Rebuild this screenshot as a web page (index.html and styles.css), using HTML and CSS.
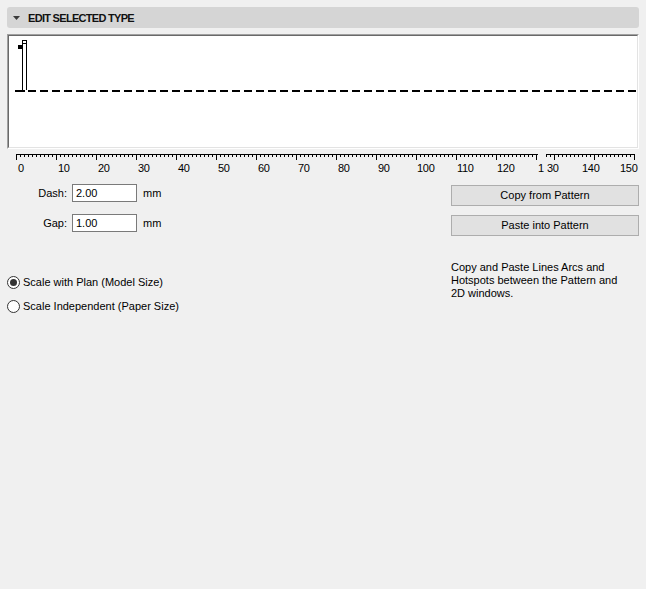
FILE: index.html
```html
<!DOCTYPE html>
<html>
<head>
<meta charset="utf-8">
<link rel="stylesheet" href="styles.css">
</head>
<body>
<div class="panel">
  <div class="header">
    <svg class="tri" width="7" height="4" viewBox="0 0 7 4"><path d="M0 0H7L3.5 4Z" fill="#3a3a3a"/></svg>
    <span class="title">EDIT SELECTED TYPE</span>
  </div>

  <div class="canvas">
    <div class="canvas-inner">
      <svg class="preview" width="628" height="111" viewBox="0 0 628 111">
        <rect x="6" y="54" width="10" height="2" fill="#000"/>
        <line x1="19" y1="55" x2="628" y2="55" stroke="#000" stroke-width="2" stroke-dasharray="8 4"/>
        <rect x="13" y="7" width="1" height="47" fill="#000"/>
        <rect x="17" y="7" width="1" height="47" fill="#000"/>
        <rect x="13.5" y="4.5" width="4" height="3" fill="#fff" stroke="#000"/>
        <rect x="9" y="9" width="5" height="4" fill="#000"/>
      </svg>
    </div>
  </div>

  <svg class="ruler" width="632" height="28" viewBox="7 149 632 28">
    <defs>
      <pattern id="minor" x="16" y="0" width="4" height="200" patternUnits="userSpaceOnUse">
        <rect x="0" y="0" width="1" height="200" fill="#000"/>
      </pattern>
      <pattern id="major" x="16" y="0" width="40" height="200" patternUnits="userSpaceOnUse">
        <rect x="0" y="0" width="1" height="200" fill="#000"/>
      </pattern>
      <pattern id="minor2" x="546" y="0" width="4" height="200" patternUnits="userSpaceOnUse">
        <rect x="0" y="0" width="1" height="200" fill="#000"/>
      </pattern>
      <pattern id="major2" x="554" y="0" width="40" height="200" patternUnits="userSpaceOnUse">
        <rect x="0" y="0" width="1" height="200" fill="#000"/>
      </pattern>
    </defs>
    <rect x="16" y="154" width="522" height="1" fill="#000"/>
    <rect x="16" y="155" width="522" height="2" fill="url(#minor)"/>
    <rect x="16" y="155" width="522" height="5" fill="url(#major)"/>
    <rect x="546" y="154" width="89" height="1" fill="#000"/>
    <rect x="546" y="155" width="89" height="2" fill="url(#minor2)"/>
    <rect x="554" y="155" width="81" height="5" fill="url(#major2)"/>
    <rect x="634" y="155" width="1" height="5" fill="#000"/>
    <g class="labels">
      <text x="18" y="172">0</text>
      <text x="58" y="172">10</text>
      <text x="98" y="172">20</text>
      <text x="138" y="172">30</text>
      <text x="178" y="172">40</text>
      <text x="218" y="172">50</text>
      <text x="258" y="172">60</text>
      <text x="298" y="172">70</text>
      <text x="338" y="172">80</text>
      <text x="378" y="172">90</text>
      <text x="417" y="172">100</text>
      <text x="457" y="172">110</text>
      <text x="497" y="172">120</text>
      <text x="538" y="172">1</text>
      <text x="547" y="172">30</text>
      <text x="582" y="172">140</text>
      <text x="620" y="172">150</text>
    </g>
  </svg>

  <div class="controls">
    <div class="fields">
      <div class="field">
        <span class="label">Dash:</span>
        <span class="input">2.00</span>
        <span class="unit">mm</span>
      </div>
      <div class="field">
        <span class="label">Gap:</span>
        <span class="input">1.00</span>
        <span class="unit">mm</span>
      </div>
    </div>
    <div class="buttons">
      <div class="button">Copy from Pattern</div>
      <div class="button">Paste into Pattern</div>
    </div>
  </div>

  <div class="lower">
    <div class="radios">
      <div class="radio-row"><span class="radio checked"></span><span>Scale with Plan (Model Size)</span></div>
      <div class="radio-row"><span class="radio"></span><span>Scale Independent (Paper Size)</span></div>
    </div>
    <p class="desc">Copy and Paste Lines Arcs and Hotspots between the Pattern and 2D windows.</p>
  </div>
</div>
</body>
</html>
```

FILE: styles.css
```css
* { box-sizing: border-box; }

html, body {
  margin: 0;
  padding: 0;
  background: #f0f0f0;
  width: 646px;
  height: 589px;
  overflow: hidden;
}

body {
  font-family: "Liberation Sans", Arial, sans-serif;
  font-size: 11px;
  color: #000;
}

.panel {
  padding: 7px 7px 0 7px;
}

.header {
  height: 21px;
  background: #d5d5d5;
  border-radius: 3px;
  display: flex;
  align-items: center;
  padding-left: 6px;
}

.tri {
  display: block;
  margin-right: 8px;
  margin-top: 1px;
}

.title {
  font-weight: bold;
  font-size: 11px;
  letter-spacing: -0.7px;
  color: #111;
}

.canvas {
  margin-top: 6px;
  height: 115px;
  border-top: 1px solid #a0a0a0;
  border-left: 1px solid #a0a0a0;
  border-right: 1px solid #ffffff;
  border-bottom: 1px solid #ffffff;
}

.canvas-inner {
  height: 100%;
  background: #fff;
  border-top: 1px solid #696969;
  border-left: 1px solid #696969;
  border-right: 1px solid #e3e3e3;
  border-bottom: 1px solid #e3e3e3;
  overflow: hidden;
}

.preview {
  display: block;
}

.ruler {
  display: block;
}

.ruler text {
  font-family: "Liberation Sans", Arial, sans-serif;
  font-size: 11px;
  letter-spacing: -0.3px;
  fill: #000;
}

.controls {
  display: flex;
  justify-content: space-between;
  align-items: flex-start;
}

.fields {
  display: flex;
  flex-direction: column;
  gap: 12px;
  margin-top: 7px;
}

.field {
  display: flex;
  align-items: center;
  height: 18px;
}

.label {
  width: 60px;
  text-align: right;
  margin-right: 5px;
}

.input {
  width: 65px;
  height: 18px;
  border: 1px solid #7a7a7a;
  background: #fff;
  padding-left: 3px;
  line-height: 16px;
}

.unit {
  margin-left: 6px;
}

.buttons {
  display: flex;
  flex-direction: column;
  gap: 9px;
  margin-top: 8px;
}

.button {
  width: 188px;
  height: 21px;
  background: #e1e1e1;
  border: 1px solid #adadad;
  text-align: center;
  line-height: 19px;
}

.lower {
  display: flex;
  justify-content: space-between;
  align-items: flex-start;
}

.radios {
  margin-top: 34px;
  display: flex;
  flex-direction: column;
}

.radio-row {
  display: flex;
  align-items: center;
  height: 24px;
}

.radio {
  width: 13px;
  height: 13px;
  border: 1px solid #333;
  border-radius: 50%;
  background: #fff;
  margin-right: 3px;
  display: flex;
  align-items: center;
  justify-content: center;
}

.radio.checked::after {
  content: "";
  width: 7px;
  height: 7px;
  border-radius: 50%;
  background: #333;
}

.desc {
  width: 188px;
  padding-right: 12px;
  margin: 25px 0 0 0;
  line-height: 13px;
}
```
